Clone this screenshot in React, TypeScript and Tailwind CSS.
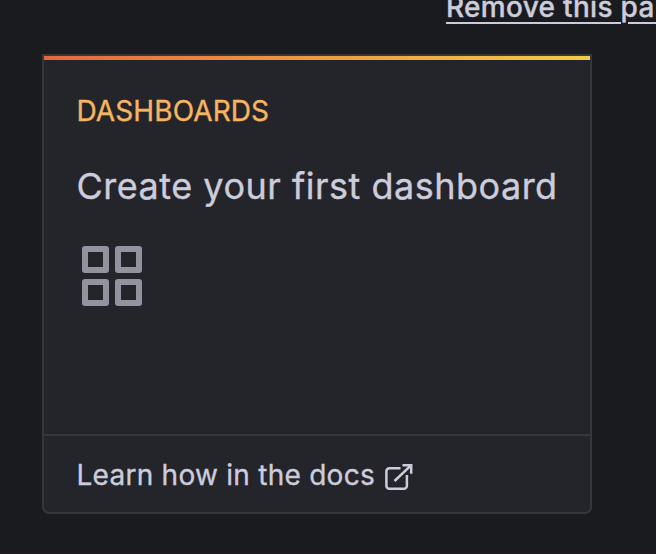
export default function App() {
  return (
    <main className="flex h-[554px] w-[656px] flex-col overflow-hidden border-b border-[#211a20] bg-[#1a1b1f] pl-[42px] font-['Inter',sans-serif] text-[#ccccdc] [-webkit-text-stroke:0.35px]">
      <header className="flex h-[54px] shrink-0 justify-end overflow-hidden">
        <a className="-mt-[11px] w-[210px] whitespace-nowrap text-[28px] leading-9 font-medium tracking-[0.3px] underline decoration-2 underline-offset-[5px]">Remove this panel</a>
      </header>
      <section className="flex h-[460px] w-[550px] shrink-0 flex-col overflow-hidden rounded-b-[7px] border-2 border-[#36373c] bg-[#24252b]">
        <div className="h-1 shrink-0 bg-linear-to-r from-[#e4683c] to-[#f3cb45]" />
        <div className="flex grow flex-col items-start pl-[32.5px]">
          <h2 className="mt-[33px] text-[28px] leading-9 tracking-[0.1px] text-[#f5b562]">DASHBOARDS</h2>
          <h1 className="mt-[33px] whitespace-nowrap text-[36px] leading-[48px] tracking-[0.5px]">Create your first dashboard</h1>
          <svg className="mt-[36px] ml-[5.5px] h-[60px] w-[60px]" viewBox="0 0 60 60" fill="none" stroke="#9292a0" strokeWidth="6" strokeLinejoin="round">
            <path d="M3 3h21v21H3zM36 3h21v21H36zM3 36h21v21H3zM36 36h21v21H36z" />
          </svg>
        </div>
        <footer className="flex h-[78px] shrink-0 items-center gap-[10px] border-t-2 border-[#36373c] pt-px pl-[32.5px]">
          <a className="text-[28px] leading-9 tracking-[0.26px]">Learn how in the docs</a>
          <svg className="mt-[5px] h-7 w-7" viewBox="0 0 28 28" fill="none" stroke="#ccccdc" strokeWidth="2.5">
            <path d="M15.5 5.3H4.4a3 3 0 0 0-3 3v14.5a3 3 0 0 0 3 3h14.5a3 3 0 0 0 3-3V12M17.5 2.2h8.7v8.6M26 2.3 9.5 18" />
          </svg>
        </footer>
      </section>
    </main>
  );
}
